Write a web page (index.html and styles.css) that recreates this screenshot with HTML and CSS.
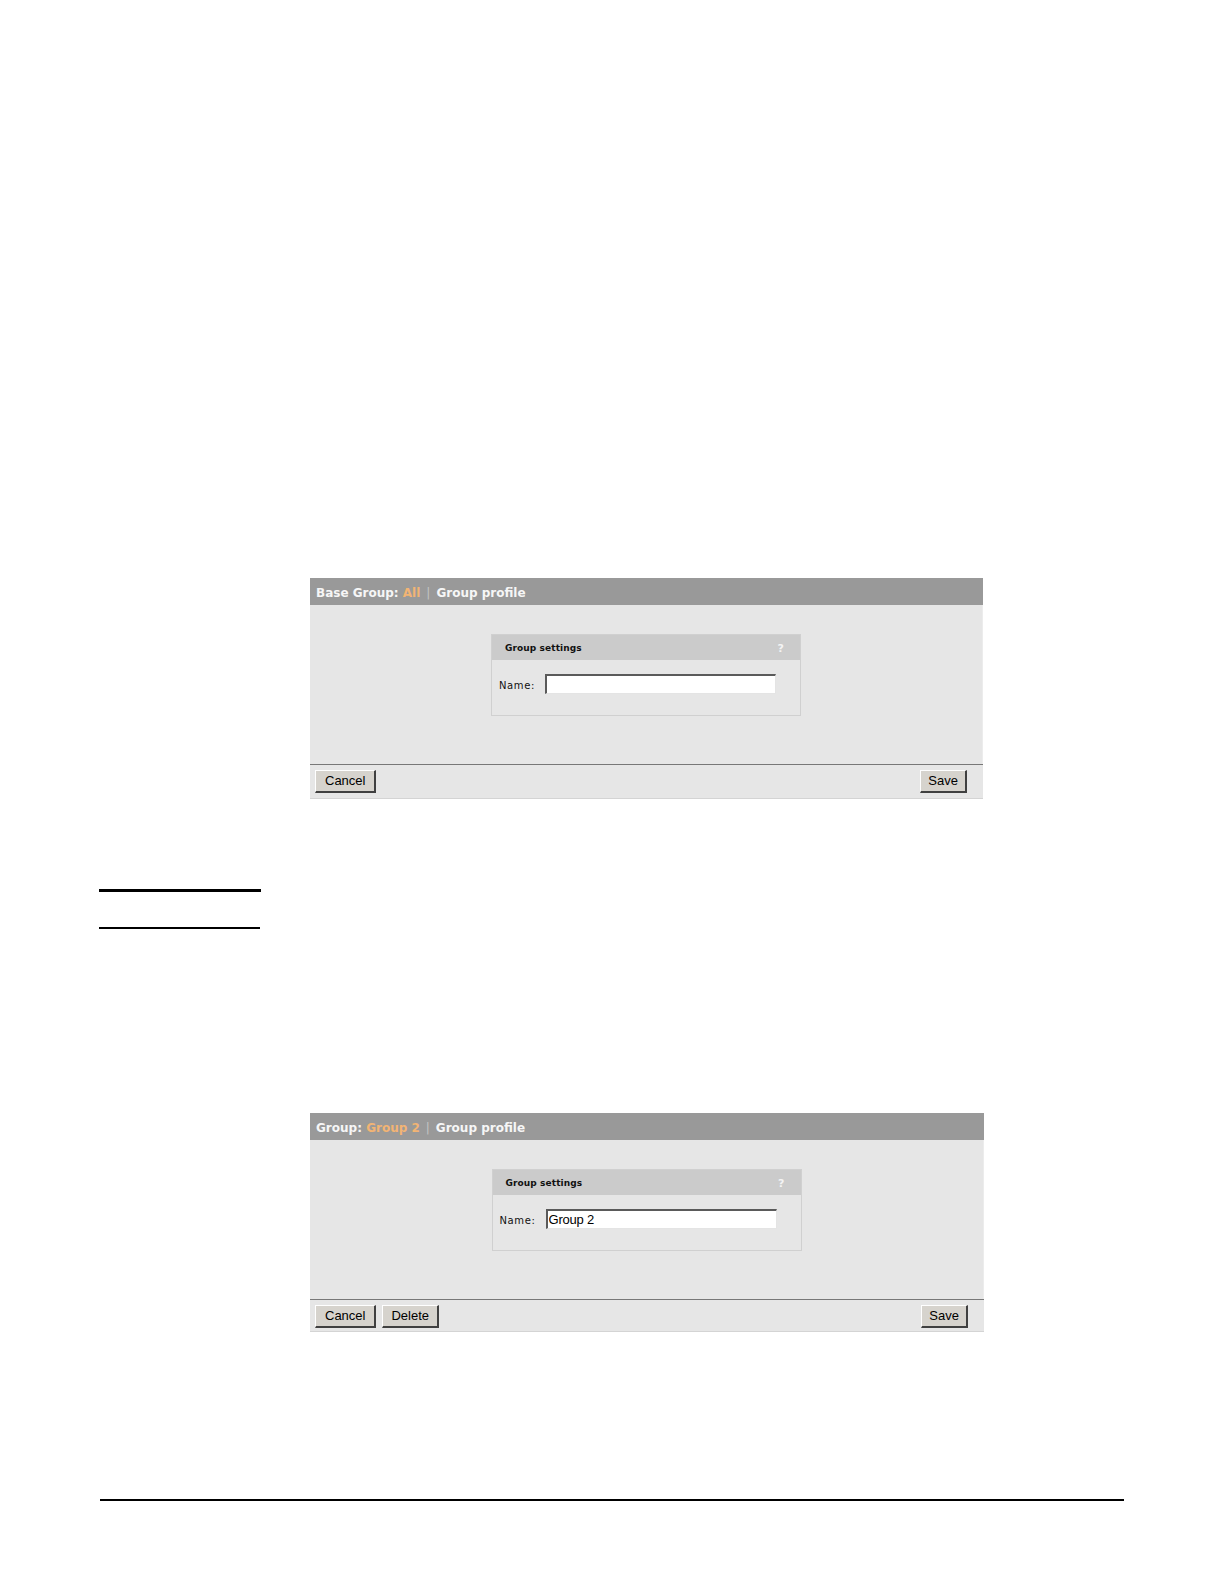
FILE: index.html
```html
<!DOCTYPE html>
<html lang="en">
<head>
<meta charset="utf-8">
<title>Group profile</title>
<link rel="stylesheet" href="styles.css">
</head>
<body>
<div class="page">
  <section class="panel panel-first">
    <div class="panel-head">
      <span class="crumb">Base Group: </span><span class="crumb-hl">All</span><span class="sep">|</span><span class="crumb">Group profile</span>
    </div>
    <div class="panel-body">
      <div class="box">
        <div class="box-head"><span class="box-title">Group settings</span><span class="help">?</span></div>
        <div class="box-body">
          <label class="field-label">Name:</label>
          <input class="field-input" type="text" value="">
        </div>
      </div>
    </div>
    <div class="panel-foot">
      <div class="btn-group"><button class="btn btn-cancel">Cancel</button></div>
      <div class="btn-group"><button class="btn btn-save">Save</button></div>
    </div>
  </section>

  <div class="rules">
    <div class="rule-thick"></div>
    <div class="rule-thin"></div>
  </div>

  <section class="panel panel-second">
    <div class="panel-head">
      <span class="crumb">Group: </span><span class="crumb-hl">Group 2</span><span class="sep">|</span><span class="crumb">Group profile</span>
    </div>
    <div class="panel-body">
      <div class="box">
        <div class="box-head"><span class="box-title">Group settings</span><span class="help">?</span></div>
        <div class="box-body">
          <label class="field-label">Name:</label>
          <input class="field-input" type="text" value="Group 2">
        </div>
      </div>
    </div>
    <div class="panel-foot">
      <div class="btn-group"><button class="btn btn-cancel">Cancel</button><button class="btn">Delete</button></div>
      <div class="btn-group"><button class="btn btn-save">Save</button></div>
    </div>
  </section>

  <div class="page-rule"></div>
</div>
</body>
</html>
```

FILE: styles.css
```css
html, body {
  margin: 0;
  padding: 0;
  background: #ffffff;
}

.page {
  padding-top: 578px;
  width: 1224px;
  min-height: 1584px;
  box-sizing: border-box;
}

.panel {
  margin-left: 310px;
  width: 673px;
  background: #e6e6e6;
}

.panel-second {
  margin-top: 184px;
  width: 674px;
}

.panel-head {
  height: 27px;
  box-sizing: border-box;
  background: #999999;
  display: flex;
  align-items: center;
  padding: 3px 0 0 6px;
  font-family: "DejaVu Sans", Verdana, sans-serif;
  font-weight: bold;
  font-size: 12px;
  color: #f6f6f6;
  white-space: pre;
}

.crumb-hl {
  color: #f2b474;
}

.sep {
  color: #c4c4c4;
  font-weight: normal;
  padding: 0 6px 0 6px;
}

.panel-body {
  padding: 29px 0 48px 0;
  border-right: 1px solid #ececec;
}

.box {
  width: 310px;
  box-sizing: border-box;
  margin: 0 auto;
  border: 1px solid #d0d0d0;
  background: #e6e6e6;
}

.box-head {
  height: 25px;
  background: #cbcbcb;
  display: flex;
  align-items: center;
  justify-content: space-between;
  padding: 1px 16px 0 13px;
  box-sizing: border-box;
}

.box-title {
  font-family: "DejaVu Sans", Verdana, sans-serif;
  font-weight: bold;
  font-size: 9px;
  letter-spacing: 0.1px;
  color: #111111;
}

.help {
  font-family: "DejaVu Sans", sans-serif;
  font-weight: bold;
  font-size: 11px;
  color: #f4f4f4;
}

.box-body {
  display: flex;
  align-items: center;
  padding: 14px 0 21px 7px;
}

.field-label {
  font-family: "DejaVu Sans", sans-serif;
  font-size: 10px;
  letter-spacing: 0.6px;
  color: #111111;
  width: 46px;
  padding-top: 2px;
}

.field-input {
  width: 231px;
  height: 20px;
  box-sizing: border-box;
  margin: 0;
  padding: 0 0 0 1px;
  border-style: solid;
  border-width: 2px 1px 1px 2px;
  border-color: #5a5a5a #e4e4e4 #e4e4e4 #5a5a5a;
  background: #ffffff;
  font-family: "Liberation Sans", Arial, sans-serif;
  font-size: 13px;
  letter-spacing: -0.2px;
  color: #000000;
  outline: none;
}

.panel-foot {
  border-top: 1px solid #777777;
  border-bottom: 1px solid #d4d4d4;
  display: flex;
  justify-content: space-between;
  align-items: flex-start;
  padding: 5px 16px 0 5px;
  box-sizing: border-box;
  height: 35px;
}

.panel-second .panel-foot {
  height: 33px;
}

.btn-group {
  display: flex;
  gap: 6px;
}

.btn {
  height: 23px;
  margin: 0;
  padding: 0 8px;
  background: #d6d3cd;
  border-style: solid;
  border-width: 1px 2px 2px 1px;
  border-color: #ffffff #404040 #404040 #ffffff;
  font-family: "Liberation Sans", Arial, sans-serif;
  font-size: 13px;
  color: #000000;
  line-height: 18px;
}

.btn-cancel {
  padding: 0 9px;
}

.btn-save {
  padding: 0 7px;
}

.rules {
  margin: 90px 0 0 99px;
}

.rule-thick {
  width: 162px;
  height: 3px;
  background: #000000;
}

.rule-thin {
  margin-top: 35px;
  width: 161px;
  height: 2px;
  background: #000000;
}

.page-rule {
  margin: 167px 0 0 100px;
  width: 1024px;
  height: 2px;
  background: #000000;
}
```
